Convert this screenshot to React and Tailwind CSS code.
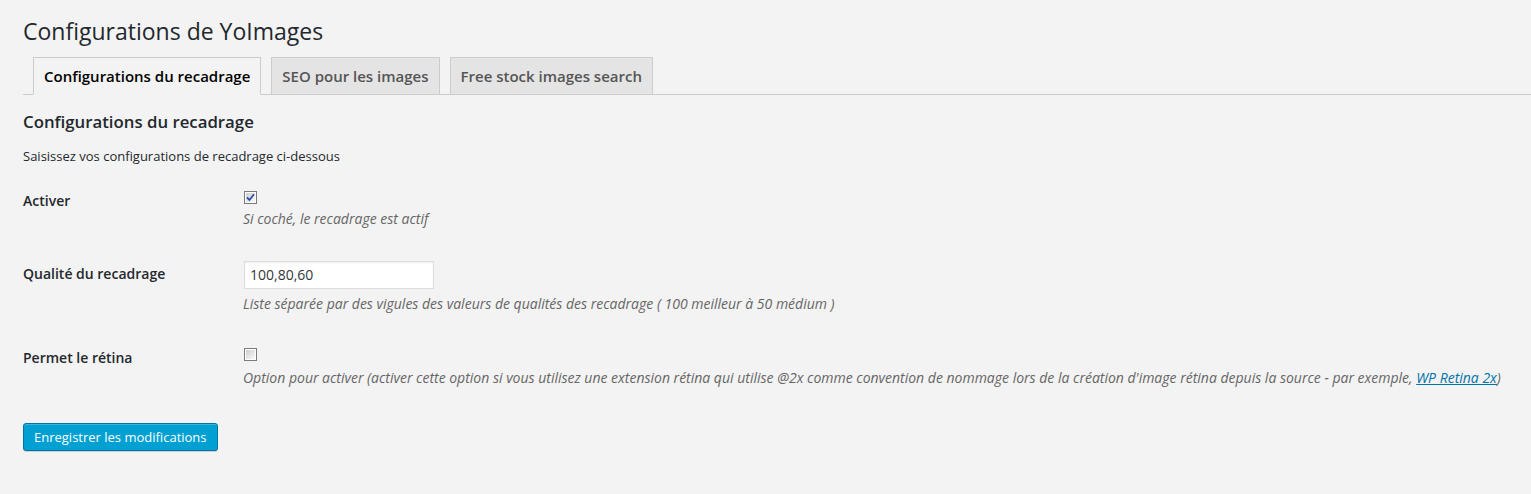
import React from 'react';

function Checkbox({ checked }) {
  return (
    <div className="w-[13px] h-[13px] border border-[#7a7a7a] bg-white p-px">
      <div className="w-full h-full bg-gradient-to-br from-[#cfcfcf] to-[#fafafa] flex items-center justify-center">
        {checked && (
          <svg width="9" height="9" viewBox="0 0 9 9">
            <path d="M1 4.5 L3.5 7 L8 1.2" fill="none" stroke="#2b4ea8" strokeWidth="1.8" />
          </svg>
        )}
      </div>
    </div>
  );
}

function Tab({ label, active }) {
  return (
    <div
      className={
        'px-[10px] py-[6px] leading-[24px] text-[15px] font-semibold border border-[#ccc] -mb-px ' +
        (active ? 'bg-[#f3f3f3] border-b-[#f3f3f3] text-black' : 'bg-[#e4e4e4] text-[#555]')
      }
    >
      {label}
    </div>
  );
}

export default function App() {
  return (
    <div className="min-h-[494px] bg-[#f3f3f3] pt-[17px] pl-[23px] text-[#23282d] font-['Open_Sans',sans-serif]">
      {/* Title */}
      <h1 className="text-[23px] leading-[29px] font-normal">Configurations de YoImages</h1>

      {/* Tabs */}
      <div className="mt-[11px] flex gap-[10px] pl-[10px] border-b border-[#ccc]">
        <Tab label="Configurations du recadrage" active />
        <Tab label="SEO pour les images" />
        <Tab label="Free stock images search" />
      </div>

      {/* Section */}
      <h2 className="mt-[15px] text-[16.8px] leading-[24px] font-semibold">Configurations du recadrage</h2>
      <p className="mt-[12px] text-[13px] leading-[20px]">Saisissez vos configurations de recadrage ci-dessous</p>

      {/* Activer */}
      <div className="mt-[25px] flex">
        <div className="w-[220px] text-[14px] leading-[20px] font-semibold">Activer</div>
        <div>
          <div className="pl-px">
            <Checkbox checked />
          </div>
          <p className="mt-[5px] text-[14px] leading-[20px] italic text-[#666]">Si coché, le recadrage est actif</p>
        </div>
      </div>

      {/* Qualité */}
      <div className="mt-[32px] flex">
        <div className="w-[220px] pt-[3px] text-[14px] leading-[20px] font-semibold">Qualité du recadrage</div>
        <div>
          <div className="ml-px w-[190px] h-[28px] bg-white border border-[#ddd] shadow-[inset_0_1px_2px_rgba(0,0,0,0.07)] px-[5px] text-[14px] leading-[26px] text-[#32373c]">
            100,80,60
          </div>
          <p className="mt-[5px] text-[14px] leading-[20px] italic text-[#666]">
            Liste séparée par des vigules des valeurs de qualités des recadrage ( 100 meilleur à 50 médium )
          </p>
        </div>
      </div>

      {/* Rétina */}
      <div className="mt-[34px] flex">
        <div className="w-[220px] text-[14px] leading-[20px] font-semibold">Permet le rétina</div>
        <div>
          <div className="pl-px">
            <Checkbox />
          </div>
          <p className="mt-[7px] text-[14px] leading-[20px] italic text-[#666]">
            Option pour activer (activer cette option si vous utilisez une extension rétina qui utilise @2x comme convention de nommage lors de la création d'image rétina depuis la source - par exemple,{' '}
            <a href="#" className="text-[#0073aa] underline">WP Retina 2x</a>)
          </p>
        </div>
      </div>

      {/* Submit */}
      <div className="mt-[35px]">
        <button className="h-[28px] px-[10px] text-[13px] leading-[26px] text-white bg-[#00a0d2] border border-[#0073aa] rounded-[3px] shadow-[inset_0_1px_0_rgba(120,200,230,0.5),0_1px_0_rgba(0,0,0,0.15)]">
          Enregistrer les modifications
        </button>
      </div>
    </div>
  );
}
